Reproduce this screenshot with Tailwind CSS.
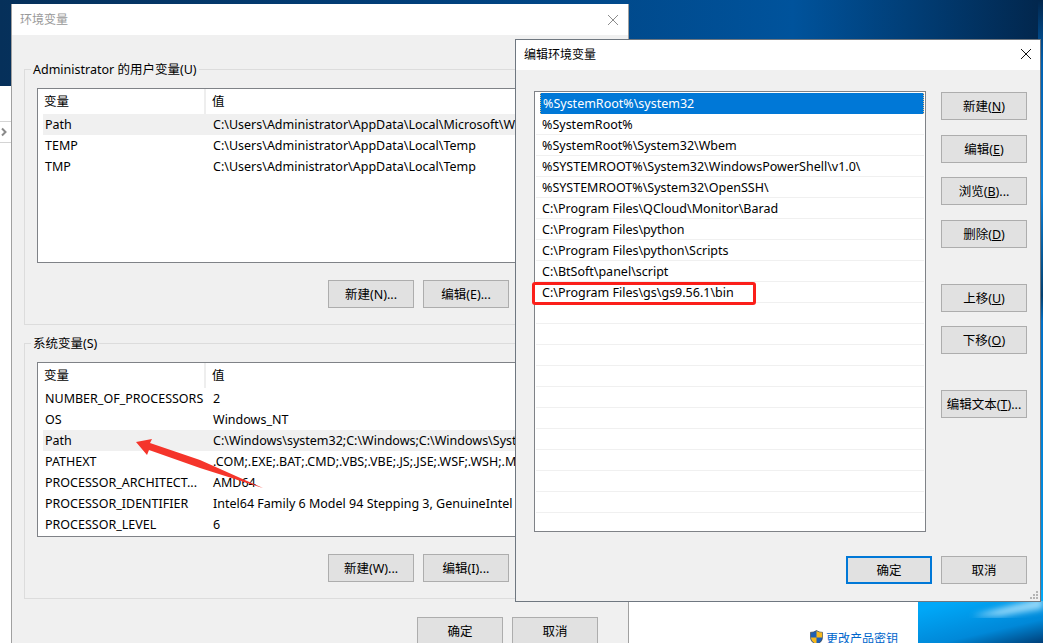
<!DOCTYPE html>
<html lang="zh-CN">
<head>
    <meta charset="UTF-8">
    <title>环境变量</title>
    <script src="https://cdn.jsdelivr.net/npm/@tailwindcss/browser@4"></script>
</head>
<body class="bg-white">
<div class="relative w-[1043px] h-[643px] overflow-hidden text-[12.5px] leading-[21px] text-black font-['Noto_Sans','Noto_Sans_CJK_SC',sans-serif]">

    <!-- Wallpaper -->
    <svg class="absolute inset-0" width="1043" height="643" viewBox="0 0 1043 643">
        <defs>
            <linearGradient id="wallTop" x1="0" y1="0" x2="1" y2="0">
                <stop offset="0" stop-color="#06305a"/>
                <stop offset="0.4" stop-color="#013f7a"/>
                <stop offset="0.76" stop-color="#00539c"/>
                <stop offset="1" stop-color="#02264c"/>
            </linearGradient>
            <linearGradient id="wallStrip" x1="0" y1="0" x2="0" y2="1">
                <stop offset="0" stop-color="#02264c"/>
                <stop offset="0.1" stop-color="#0060b0"/>
                <stop offset="0.3" stop-color="#0a80d8"/>
                <stop offset="0.46" stop-color="#024070"/>
                <stop offset="0.5" stop-color="#0070c8"/>
                <stop offset="1" stop-color="#00a0f0"/>
            </linearGradient>
            <linearGradient id="wallBottom" x1="0.3" y1="0" x2="1" y2="1">
                <stop offset="0" stop-color="#00a8f8"/>
                <stop offset="0.62" stop-color="#0088d8"/>
                <stop offset="1" stop-color="#003f78"/>
            </linearGradient>
            <filter id="soft"><feGaussianBlur stdDeviation="3"/></filter>
        </defs>
        <rect width="1043" height="643" fill="url(#wallTop)"/>
        <rect x="1038" y="0" width="5" height="643" fill="url(#wallStrip)"/>
        <rect x="917" y="601" width="126" height="42" fill="url(#wallBottom)"/>
        <polygon points="972,616 1043,597 1043,609 1000,616" fill="#c8eeff" opacity="0.75" filter="url(#soft)"/>
        <rect x="917" y="590" width="126" height="11" fill="#00a8f8"/>
    </svg>

    <!-- Control panel behind the dialogs -->
    <div class="absolute left-0 top-[86px] w-[12px] h-[557px] bg-white">
        <div class="mt-[35px] h-[22px] border-y border-[#d4d4d4] flex items-center">
            <svg width="8" height="10" viewBox="0 0 8 10"><path d="M2 1.5 L5.5 5 L2 8.5" fill="none" stroke="#8a8a8a" stroke-width="2"/></svg>
        </div>
    </div>
    <div class="absolute left-[629px] top-[590px] w-[289px] h-[53px] bg-white">
        <div class="flex items-start gap-[3px] ml-[181px] mt-[40px] text-[#0066cc] text-[12px] leading-[18px] whitespace-nowrap">
            <svg width="13" height="15" viewBox="0 0 13 15" class="shrink-0">
                <path d="M6.5 0.5 C8.5 1.8 10.5 2.3 12.5 2.3 V7.5 C12.5 11 9.5 13.5 6.5 14.5 C3.5 13.5 0.5 11 0.5 7.5 V2.3 C2.5 2.3 4.5 1.8 6.5 0.5 Z" fill="#1f5fb4" stroke="#3a3a3a" stroke-width="0.6"/>
                <path d="M6.5 1 V7.5 H12.2 V2.6 C10.2 2.5 8.3 2 6.5 1 Z" fill="#f9b91c"/>
                <path d="M6.5 7.5 V14 C3.8 13 1.2 11 0.9 7.5 Z" fill="#f9b91c"/>
            </svg>
            <span>更改产品密钥</span>
        </div>
    </div>

    <!-- 环境变量 dialog (inactive) -->
    <div class="absolute left-[11px] top-[4px] w-[618px] h-[660px] bg-[#f0f0f0] border-x border-[#a0a0a0] flex flex-col">
        <div class="h-[31px] shrink-0 bg-white flex items-center justify-between pl-[8px] pr-[9px] text-[#999999] text-[12px]">
            <span>环境变量</span>
            <svg width="12" height="12" viewBox="0 0 12 12"><path d="M1 1 L11 11 M11 1 L1 11" stroke="#8c8c8c" stroke-width="1"/></svg>
        </div>
        <div class="px-[12px] pt-[34px] flex flex-col gap-[18px]">
            <!-- user variables -->
            <div class="relative border border-[#dcdcdc] pl-[12px] pr-[12px] pt-[18px] pb-[16px]">
                <span class="absolute left-[6px] -top-[11px] bg-[#f0f0f0] px-[2px]">Administrator 的用户变量(U)</span>
                <div class="w-[482px] h-[175px] bg-white border border-[#7f8287] overflow-hidden">
                    <div class="flex h-[25px] items-center">
                        <div class="w-[168px] h-full pl-[6px] flex items-center border-r-2 border-[#eeeeee]">变量</div>
                        <div class="pl-[6px]">值</div>
                    </div>
                    <div class="ml-[5px] h-[21px] flex bg-[#f0f0f0] whitespace-nowrap"><div class="w-[170px] shrink-0 pl-[2px]">Path</div><div>C:\Users\Administrator\AppData\Local\Microsoft\WindowsApps;</div></div>
                    <div class="ml-[5px] h-[21px] flex whitespace-nowrap"><div class="w-[170px] shrink-0 pl-[2px]">TEMP</div><div>C:\Users\Administrator\AppData\Local\Temp</div></div>
                    <div class="ml-[5px] h-[21px] flex whitespace-nowrap"><div class="w-[170px] shrink-0 pl-[2px]">TMP</div><div>C:\Users\Administrator\AppData\Local\Temp</div></div>
                </div>
                <div class="flex gap-[9px] ml-[291px] mt-[17px]">
                    <button class="w-[86px] h-[28px] bg-[#e1e1e1] border border-[#adadad]">新建(N)...</button>
                    <button class="w-[86px] h-[28px] bg-[#e1e1e1] border border-[#adadad]">编辑(E)...</button>
                </div>
            </div>
            <!-- system variables -->
            <div class="relative border border-[#dcdcdc] pl-[12px] pr-[12px] pt-[18px] pb-[16px]">
                <span class="absolute left-[6px] -top-[11px] bg-[#f0f0f0] px-[2px]">系统变量(S)</span>
                <div class="w-[482px] h-[175px] bg-white border border-[#7f8287] overflow-hidden">
                    <div class="flex h-[25px] items-center">
                        <div class="w-[168px] h-full pl-[6px] flex items-center border-r-2 border-[#eeeeee]">变量</div>
                        <div class="pl-[6px]">值</div>
                    </div>
                    <div class="ml-[5px] h-[21px] flex whitespace-nowrap"><div class="w-[170px] shrink-0 pl-[2px]">NUMBER_OF_PROCESSORS</div><div>2</div></div>
                    <div class="ml-[5px] h-[21px] flex whitespace-nowrap"><div class="w-[170px] shrink-0 pl-[2px]">OS</div><div>Windows_NT</div></div>
                    <div class="ml-[5px] h-[21px] flex bg-[#f0f0f0] whitespace-nowrap"><div class="w-[170px] shrink-0 pl-[2px]">Path</div><div>C:\Windows\system32;C:\Windows;C:\Windows\System32\Wbem;</div></div>
                    <div class="ml-[5px] h-[21px] flex whitespace-nowrap"><div class="w-[170px] shrink-0 pl-[2px]">PATHEXT</div><div>.COM;.EXE;.BAT;.CMD;.VBS;.VBE;.JS;.JSE;.WSF;.WSH;.MSC</div></div>
                    <div class="ml-[5px] h-[21px] flex whitespace-nowrap"><div class="w-[170px] shrink-0 pl-[2px]">PROCESSOR_ARCHITECT...</div><div>AMD64</div></div>
                    <div class="ml-[5px] h-[21px] flex whitespace-nowrap"><div class="w-[170px] shrink-0 pl-[2px]">PROCESSOR_IDENTIFIER</div><div>Intel64 Family 6 Model 94 Stepping 3, GenuineIntel</div></div>
                    <div class="ml-[5px] h-[21px] flex whitespace-nowrap"><div class="w-[170px] shrink-0 pl-[2px]">PROCESSOR_LEVEL</div><div>6</div></div>
                </div>
                <div class="flex gap-[9px] ml-[291px] mt-[17px]">
                    <button class="w-[86px] h-[28px] bg-[#e1e1e1] border border-[#adadad]">新建(W)...</button>
                    <button class="w-[86px] h-[28px] bg-[#e1e1e1] border border-[#adadad]">编辑(I)...</button>
                </div>
            </div>
            <div class="flex gap-[9px] ml-[393px]">
                <button class="w-[86px] h-[28px] bg-[#e1e1e1] border border-[#adadad]">确定</button>
                <button class="w-[86px] h-[28px] bg-[#e1e1e1] border border-[#adadad]">取消</button>
            </div>
        </div>
    </div>

    <!-- Arrow annotation -->
    <svg class="absolute left-0 top-0" width="1043" height="643" viewBox="0 0 1043 643">
        <polygon points="136,442 152,439 150,443 200,460 263,488 200,468 149,450 147,455" fill="#f5352b"/>
    </svg>

    <!-- 编辑环境变量 dialog (active) -->
    <div class="absolute left-[515px] top-[39px] w-[526px] h-[563px] bg-[#f0f0f0] border border-[#6f7780] flex flex-col">
        <div class="h-[30px] shrink-0 bg-white flex items-center justify-between pl-[8px] pr-[8px] pb-[2px] text-[12px]">
            <span>编辑环境变量</span>
            <svg width="12" height="12" viewBox="0 0 12 12"><path d="M1 1 L11 11 M11 1 L1 11" stroke="#111111" stroke-width="1"/></svg>
        </div>
        <div class="relative flex pl-[18px] pt-[21px]">
            <div class="w-[392px] h-[441px] bg-white border border-[#7f8287] pt-[1px] px-[1px]">
                <div class="ml-[4px] h-[21px] bg-[#0078d7] text-white pl-[2px] border-x border-dotted border-[#f0c080]">%SystemRoot%\system32</div>
                <div class="h-[21px] pl-[6px] border-b border-[#f0f0f0]">%SystemRoot%</div>
                <div class="h-[21px] pl-[6px] border-b border-[#f0f0f0]">%SystemRoot%\System32\Wbem</div>
                <div class="h-[21px] pl-[6px] border-b border-[#f0f0f0]">%SYSTEMROOT%\System32\WindowsPowerShell\v1.0\</div>
                <div class="h-[21px] pl-[6px] border-b border-[#f0f0f0]">%SYSTEMROOT%\System32\OpenSSH\</div>
                <div class="h-[21px] pl-[6px] border-b border-[#f0f0f0]">C:\Program Files\QCloud\Monitor\Barad</div>
                <div class="h-[21px] pl-[6px] border-b border-[#f0f0f0]">C:\Program Files\python</div>
                <div class="h-[21px] pl-[6px] border-b border-[#f0f0f0]">C:\Program Files\python\Scripts</div>
                <div class="h-[21px] pl-[6px] border-b border-[#f0f0f0]">C:\BtSoft\panel\script</div>
                <div class="h-[21px] pl-[6px] border-b border-[#f0f0f0]">C:\Program Files\gs\gs9.56.1\bin</div>
                <div class="h-[21px] border-b border-[#f0f0f0]"></div>
                <div class="h-[21px] border-b border-[#f0f0f0]"></div>
                <div class="h-[21px] border-b border-[#f0f0f0]"></div>
                <div class="h-[21px] border-b border-[#f0f0f0]"></div>
                <div class="h-[21px] border-b border-[#f0f0f0]"></div>
                <div class="h-[21px] border-b border-[#f0f0f0]"></div>
                <div class="h-[21px] border-b border-[#f0f0f0]"></div>
                <div class="h-[21px] border-b border-[#f0f0f0]"></div>
                <div class="h-[21px] border-b border-[#f0f0f0]"></div>
                <div class="h-[21px] border-b border-[#f0f0f0]"></div>
            </div>
            <div class="ml-[15px] pt-[1px] flex flex-col">
                <button class="w-[86px] h-[28px] bg-[#e1e1e1] border border-[#adadad]">新建(<u>N</u>)</button>
                <button class="w-[86px] h-[28px] mt-[15px] bg-[#e1e1e1] border border-[#adadad]">编辑(<u>E</u>)</button>
                <button class="w-[86px] h-[28px] mt-[14px] bg-[#e1e1e1] border border-[#adadad]">浏览(<u>B</u>)...</button>
                <button class="w-[86px] h-[28px] mt-[15px] bg-[#e1e1e1] border border-[#adadad]">删除(<u>D</u>)</button>
                <button class="w-[86px] h-[28px] mt-[36px] bg-[#e1e1e1] border border-[#adadad]">上移(<u>U</u>)</button>
                <button class="w-[86px] h-[28px] mt-[14px] bg-[#e1e1e1] border border-[#adadad]">下移(<u>O</u>)</button>
                <button class="w-[86px] h-[28px] mt-[36px] bg-[#e1e1e1] border border-[#adadad]">编辑文本(<u>T</u>)...</button>
            </div>
            <!-- red highlight annotation -->
            <div class="absolute left-[16px] top-[212px] w-[224px] h-[23px] border-[3px] border-[#fb1f1a] rounded-[3px]"></div>
        </div>
        <div class="flex justify-end gap-[9px] pr-[13px] mt-[24px]">
            <button class="w-[86px] h-[28px] bg-[#e1e1e1] border-2 border-[#0078d7]">确定</button>
            <button class="w-[86px] h-[28px] bg-[#e1e1e1] border border-[#adadad]">取消</button>
        </div>
        <!-- resize grip -->
        <svg class="absolute right-[1px] bottom-[1px]" width="9" height="9" viewBox="0 0 9 9" fill="#b4b4b4">
            <rect x="6" y="0" width="2" height="2"/>
            <rect x="3" y="3" width="2" height="2"/><rect x="6" y="3" width="2" height="2"/>
            <rect x="0" y="6" width="2" height="2"/><rect x="3" y="6" width="2" height="2"/><rect x="6" y="6" width="2" height="2"/>
        </svg>
    </div>
</div>
</body>
</html>
